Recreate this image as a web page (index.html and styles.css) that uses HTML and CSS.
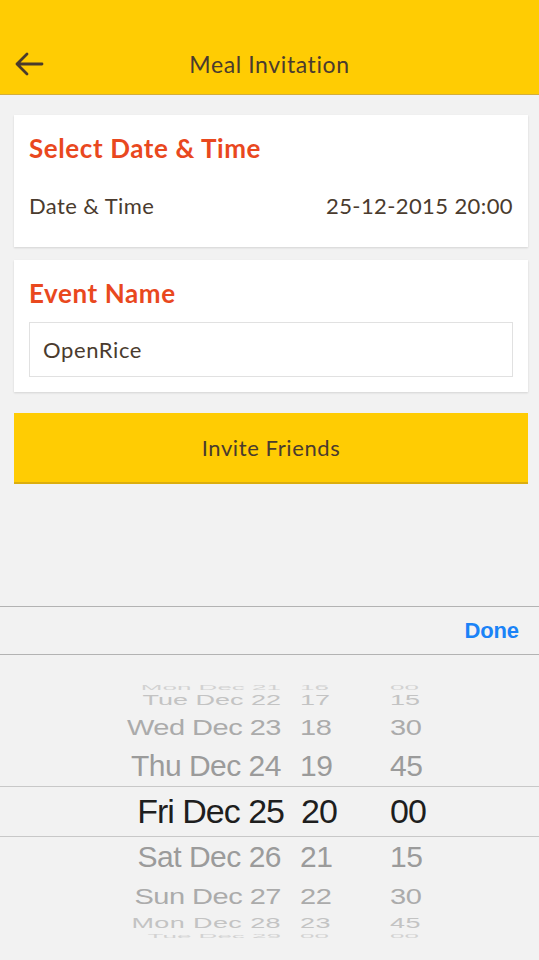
FILE: index.html
```html
<!DOCTYPE html>
<html>
<head>
<meta charset="utf-8">
<link rel="stylesheet" href="styles.css">
</head>
<body>
<div class="page">
  <header class="topbar">
    <svg class="back" width="30" height="24" viewBox="0 0 30 24">
      <path d="M28 12 H3 M13 2 L3 12 L13 22" fill="none" stroke="#4a3b2c" stroke-width="2.8" stroke-linecap="round" stroke-linejoin="round"/>
    </svg>
    <div class="title">Meal Invitation</div>
  </header>

  <main class="content">
    <section class="card">
      <h2 class="card-title">Select Date &amp; Time</h2>
      <div class="row">
        <span>Date &amp; Time</span>
        <span>25-12-2015 20:00</span>
      </div>
    </section>

    <section class="card card-event">
      <h2 class="card-title">Event Name</h2>
      <div class="input">OpenRice</div>
    </section>

    <div class="btn">Invite Friends</div>
  </main>

  <section class="picker">
    <div class="toolbar"><span class="done">Done</span></div>
    <div class="wheel">
      <div class="w-row r-sliver r-top"><span class="d">Mon Dec 21</span><span class="h">16</span><span class="m">00</span></div>
      <div class="w-row r-far r-tue"><span class="d">Tue Dec 22</span><span class="h">17</span><span class="m">15</span></div>
      <div class="w-row r-mid r-wed"><span class="d">Wed Dec 23</span><span class="h">18</span><span class="m">30</span></div>
      <div class="w-row r-near r-thu"><span class="d">Thu Dec 24</span><span class="h">19</span><span class="m">45</span></div>
      <div class="w-row r-sel"><span class="d">Fri Dec 25</span><span class="h">20</span><span class="m">00</span></div>
      <div class="w-row r-near r-sat"><span class="d">Sat Dec 26</span><span class="h">21</span><span class="m">15</span></div>
      <div class="w-row r-mid r-sun"><span class="d">Sun Dec 27</span><span class="h">22</span><span class="m">30</span></div>
      <div class="w-row r-far r-mon"><span class="d">Mon Dec 28</span><span class="h">23</span><span class="m">45</span></div>
      <div class="w-row r-sliver r-bot"><span class="d">Tue Dec 29</span><span class="h">00</span><span class="m">00</span></div>
    </div>
  </section>
</div>
</body>
</html>
```
FILE: styles.css
```css
* { box-sizing: border-box; }
html, body { margin: 0; padding: 0; }
body {
  background: #f2f2f2;
  font-family: Lato, "Open Sans", sans-serif;
  color: #4a3b2e;
}
.page {
  width: 539px;
  height: 960px;
  display: flex;
  flex-direction: column;
  overflow: hidden;
}
.topbar {
  position: relative;
  height: 95px;
  flex: none;
  background: #ffcc03;
  border-bottom: 1px solid #d4ae3c;
  padding-top: 34px;
  display: flex;
  align-items: center;
  justify-content: center;
}
.topbar .back {
  position: absolute;
  left: 14px;
  top: 52px;
}
.title {
  font-size: 23px;
  letter-spacing: 0.6px;
  line-height: 60px;
  color: #4a3b2e;
}
.content {
  flex: 1;
  padding: 20px 11px 0 14px;
  display: flex;
  flex-direction: column;
}
.card {
  background: #fff;
  padding: 18px 15px 26px 15px;
  box-shadow: 0 1px 2px rgba(0,0,0,0.13);
}
.card-title {
  margin: 0;
  font-size: 26px;
  letter-spacing: 0.6px;
  line-height: 30px;
  font-weight: 700;
  color: #e9481e;
}
.row {
  margin-top: 28px;
  display: flex;
  justify-content: space-between;
  font-size: 22px;
  letter-spacing: 0.4px;
  line-height: 30px;
}
.card-event {
  margin-top: 13px;
  padding-bottom: 15px;
}
.input {
  margin-top: 14px;
  height: 55px;
  border: 1px solid #e1e1e1;
  padding-left: 13px;
  font-size: 22px;
  letter-spacing: 0.6px;
  line-height: 53px;
}
.btn {
  margin-top: 21px;
  height: 71px;
  background: #ffcc03;
  border-bottom: 2px solid #dcae0e;
  text-align: center;
  font-size: 22px;
  letter-spacing: 0.6px;
  line-height: 70px;
}
.picker {
  flex: none;
  height: 354px;
  display: flex;
  flex-direction: column;
  font-family: "Liberation Sans", Arial, sans-serif;
}
.toolbar {
  height: 49px;
  border-top: 1px solid #b3b3b3;
  border-bottom: 1px solid #b3b3b3;
  display: flex;
  justify-content: flex-end;
  align-items: center;
  padding-right: 20px;
}
.done {
  font-size: 22px;
  font-weight: 700;
  color: #1b83f7;
  letter-spacing: -0.1px;
  line-height: 47px;
}
.wheel {
  flex: 1;
  padding-top: 23px;
  overflow: hidden;
}
.w-row {
  display: grid;
  grid-template-columns: 281px 109px 1fr;
  white-space: nowrap;
  overflow: hidden;
}
.w-row span { display: block; }
.w-row .d { text-align: right; }
.w-row .h { padding-left: 19px; }

.r-sliver { height: 14px; font-size: 26px; line-height: 14px; color: #d2d2d2; }
.r-sliver span { transform: scaleY(0.28); }
.r-top span { transform: translateY(2px) scaleY(0.28); }
.r-bot { height: 9px; line-height: 9px; }
.r-bot span { transform: scaleY(0.22); }

.r-far { height: 16px; font-size: 27px; line-height: 16px; color: #c3c3c3; }
.r-far span { transform: scaleY(0.57); }
.r-mon { height: 17px; line-height: 17px; letter-spacing: 0.4px; }

.r-mid { height: 38px; font-size: 29px; line-height: 38px; color: #ababab; letter-spacing: -0.5px; }
.r-mid span { transform: scaleY(0.76); }

.r-near { height: 40px; font-size: 30px; line-height: 40px; color: #9b9b9b; letter-spacing: -0.5px; }

.r-sel {
  height: 51px;
  border-top: 1px solid #c8c8c8;
  border-bottom: 1px solid #c8c8c8;
  font-size: 34px;
  line-height: 49px;
  letter-spacing: -1px;
  color: #1e1e1e;
  grid-template-columns: 284px 106px 1fr;
}
.r-sel .h { padding-left: 17px; }
```
